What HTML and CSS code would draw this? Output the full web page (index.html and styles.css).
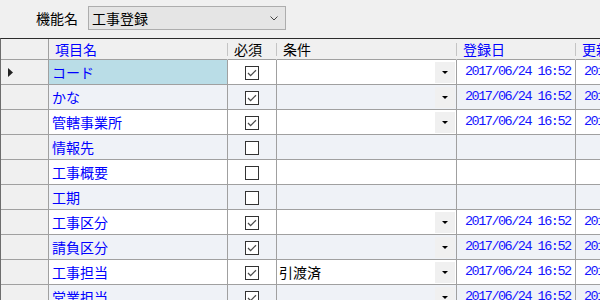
FILE: index.html
```html
<!DOCTYPE html>
<html lang="ja">
<head>
    <meta charset="UTF-8">
    <title>機能登録</title>
    <link rel="stylesheet" href="styles.css">
</head>
<body>
    <div class="toolbar">
        <span class="toolbar-label">機能名</span>
        <div class="combo">
            <span>工事登録</span>
            <svg class="combo-arrow" width="8" height="5" viewBox="0 0 8 5"><polyline points="0.5,0.5 4,4 7.5,0.5" fill="none" stroke="#444" stroke-width="1"/></svg>
        </div>
    </div>

    <table class="grid">
        <thead>
            <tr>
                <th class="corner"></th>
                <th class="col-name link">項目名</th>
                <th class="col-req">必須</th>
                <th class="col-cond">条件</th>
                <th class="col-date link">登録日</th>
                <th class="col-date link">更新日</th>
            </tr>
        </thead>
        <tbody>
            <tr>
                <td class="rowhead"><svg width="5" height="9" viewBox="0 0 5 9"><polygon points="0,0 5,4.5 0,9" fill="#222"/></svg></td>
                <td class="name selected">コード</td>
                <td class="req"><span class="check"><svg width="12" height="12" viewBox="0 0 12 12"><polyline points="2,6 4.6,8.6 10,3.2" fill="none" stroke="#4a4a4a" stroke-width="1.3"/></svg></span></td>
                <td><div class="cond"><span class="cond-text"></span><span class="dd"><i></i></span></div></td>
                <td class="date">2017/06/24 16:52</td>
                <td class="date">2017/06/24 16:52</td>
            </tr>
            <tr class="alt">
                <td class="rowhead"></td>
                <td class="name">かな</td>
                <td class="req"><span class="check"><svg width="12" height="12" viewBox="0 0 12 12"><polyline points="2,6 4.6,8.6 10,3.2" fill="none" stroke="#4a4a4a" stroke-width="1.3"/></svg></span></td>
                <td><div class="cond"><span class="cond-text"></span><span class="dd"><i></i></span></div></td>
                <td class="date">2017/06/24 16:52</td>
                <td class="date">2017/06/24 16:52</td>
            </tr>
            <tr>
                <td class="rowhead"></td>
                <td class="name">管轄事業所</td>
                <td class="req"><span class="check"><svg width="12" height="12" viewBox="0 0 12 12"><polyline points="2,6 4.6,8.6 10,3.2" fill="none" stroke="#4a4a4a" stroke-width="1.3"/></svg></span></td>
                <td><div class="cond"><span class="cond-text"></span><span class="dd"><i></i></span></div></td>
                <td class="date">2017/06/24 16:52</td>
                <td class="date">2017/06/24 16:52</td>
            </tr>
            <tr class="alt">
                <td class="rowhead"></td>
                <td class="name">情報先</td>
                <td class="req"><span class="check"></span></td>
                <td></td>
                <td class="date"></td>
                <td class="date"></td>
            </tr>
            <tr>
                <td class="rowhead"></td>
                <td class="name">工事概要</td>
                <td class="req"><span class="check"></span></td>
                <td></td>
                <td class="date"></td>
                <td class="date"></td>
            </tr>
            <tr class="alt">
                <td class="rowhead"></td>
                <td class="name">工期</td>
                <td class="req"><span class="check"></span></td>
                <td></td>
                <td class="date"></td>
                <td class="date"></td>
            </tr>
            <tr>
                <td class="rowhead"></td>
                <td class="name">工事区分</td>
                <td class="req"><span class="check"><svg width="12" height="12" viewBox="0 0 12 12"><polyline points="2,6 4.6,8.6 10,3.2" fill="none" stroke="#4a4a4a" stroke-width="1.3"/></svg></span></td>
                <td><div class="cond"><span class="cond-text"></span><span class="dd"><i></i></span></div></td>
                <td class="date">2017/06/24 16:52</td>
                <td class="date">2017/06/24 16:52</td>
            </tr>
            <tr class="alt">
                <td class="rowhead"></td>
                <td class="name">請負区分</td>
                <td class="req"><span class="check"><svg width="12" height="12" viewBox="0 0 12 12"><polyline points="2,6 4.6,8.6 10,3.2" fill="none" stroke="#4a4a4a" stroke-width="1.3"/></svg></span></td>
                <td><div class="cond"><span class="cond-text"></span><span class="dd"><i></i></span></div></td>
                <td class="date">2017/06/24 16:52</td>
                <td class="date">2017/06/24 16:52</td>
            </tr>
            <tr>
                <td class="rowhead"></td>
                <td class="name">工事担当</td>
                <td class="req"><span class="check"><svg width="12" height="12" viewBox="0 0 12 12"><polyline points="2,6 4.6,8.6 10,3.2" fill="none" stroke="#4a4a4a" stroke-width="1.3"/></svg></span></td>
                <td><div class="cond"><span class="cond-text">引渡済</span><span class="dd"><i></i></span></div></td>
                <td class="date">2017/06/24 16:52</td>
                <td class="date">2017/06/24 16:52</td>
            </tr>
            <tr class="alt">
                <td class="rowhead"></td>
                <td class="name">営業担当</td>
                <td class="req"><span class="check"><svg width="12" height="12" viewBox="0 0 12 12"><polyline points="2,6 4.6,8.6 10,3.2" fill="none" stroke="#4a4a4a" stroke-width="1.3"/></svg></span></td>
                <td><div class="cond"><span class="cond-text"></span><span class="dd"><i></i></span></div></td>
                <td class="date">2017/06/24 16:52</td>
                <td class="date">2017/06/24 16:52</td>
            </tr>
        </tbody>
    </table>
</body>
</html>
```

FILE: styles.css
```css
html, body {
    margin: 0;
    padding: 0;
    overflow: hidden;
    background: #f0f0f0;
}

body {
    font-family: "Noto Sans CJK JP", "Noto Sans", sans-serif;
    font-size: 14px;
    color: #000;
}

/* Top bar */
.toolbar {
    display: flex;
    align-items: flex-start;
    gap: 10px;
    height: 38px;
    box-sizing: border-box;
    padding: 6px 0 0 36px;
}

.toolbar-label {
    line-height: 24px;
}

.combo {
    width: 198px;
    height: 24px;
    box-sizing: border-box;
    border: 1px solid #adadad;
    background: #e5e5e5;
    display: flex;
    align-items: center;
    justify-content: space-between;
    padding: 0 7px 0 3px;
    line-height: 22px;
}

.combo-arrow {
    display: block;
}

/* Grid */
.grid {
    table-layout: fixed;
    width: 695px;
    border-collapse: separate;
    border-spacing: 0;
    border-top: 1px solid #2b2b2b;
    border-left: 1px solid #6d6d6d;
}

.grid th, .grid td {
    padding: 0;
    box-sizing: border-box;
    border-right: 1px solid #a0a0a0;
    border-bottom: 1px solid #a0a0a0;
    white-space: nowrap;
    overflow: hidden;
}

.grid th {
    height: 21px;
    line-height: 20px;
    font-weight: normal;
    text-align: left;
    padding-left: 6px;
    background: #f0f0f0;
}

.grid th:not(.corner) {
    border-right-color: transparent;
    background: linear-gradient(#c4c4c4, #c4c4c4) right center / 1px 13px no-repeat, #f0f0f0;
    background-origin: border-box;
}

.grid th.corner { width: 48px; padding: 0; }
.grid th.col-name { width: 179px; }
.grid th.col-req { width: 49px; }
.grid th.col-cond { width: 180px; }
.grid th.col-date { width: 119px; }

.link {
    color: #0000ff;
}

.grid td {
    height: 25px;
    line-height: 24px;
    background: #fff;
}

.grid tr.alt td {
    background: #eff2f7;
}

.grid td.rowhead, .grid tr.alt td.rowhead {
    background: #f0f0f0;
    padding-left: 7px;
}

.rowhead svg {
    display: block;
}

.grid td.name {
    color: #0000ff;
    padding-left: 3px;
}

.grid td.name.selected {
    background: #badde7;
}

.grid td.req {
    text-align: center;
}

.check {
    display: inline-flex;
    align-items: center;
    justify-content: center;
    width: 14px;
    height: 14px;
    box-sizing: border-box;
    border: 1px solid #333;
    background: #fff;
    vertical-align: middle;
    margin-top: -2px;
}

.check svg {
    display: block;
}

.cond {
    display: flex;
    align-items: center;
    height: 24px;
}

.cond-text {
    flex: 1;
    padding-left: 2px;
}

.dd {
    width: 20px;
    height: 21px;
    margin-right: 1px;
    background: #f0f0f0;
    display: flex;
    align-items: center;
    justify-content: center;
}

.dd i {
    width: 0;
    height: 0;
    border-left: 3px solid transparent;
    border-right: 3px solid transparent;
    border-top: 3px solid #000;
}

.grid td.date {
    font-family: "Liberation Mono", monospace;
    font-size: 13.5px;
    letter-spacing: -1.5px;
    color: #1414ff;
    padding-left: 8px;
}
```
